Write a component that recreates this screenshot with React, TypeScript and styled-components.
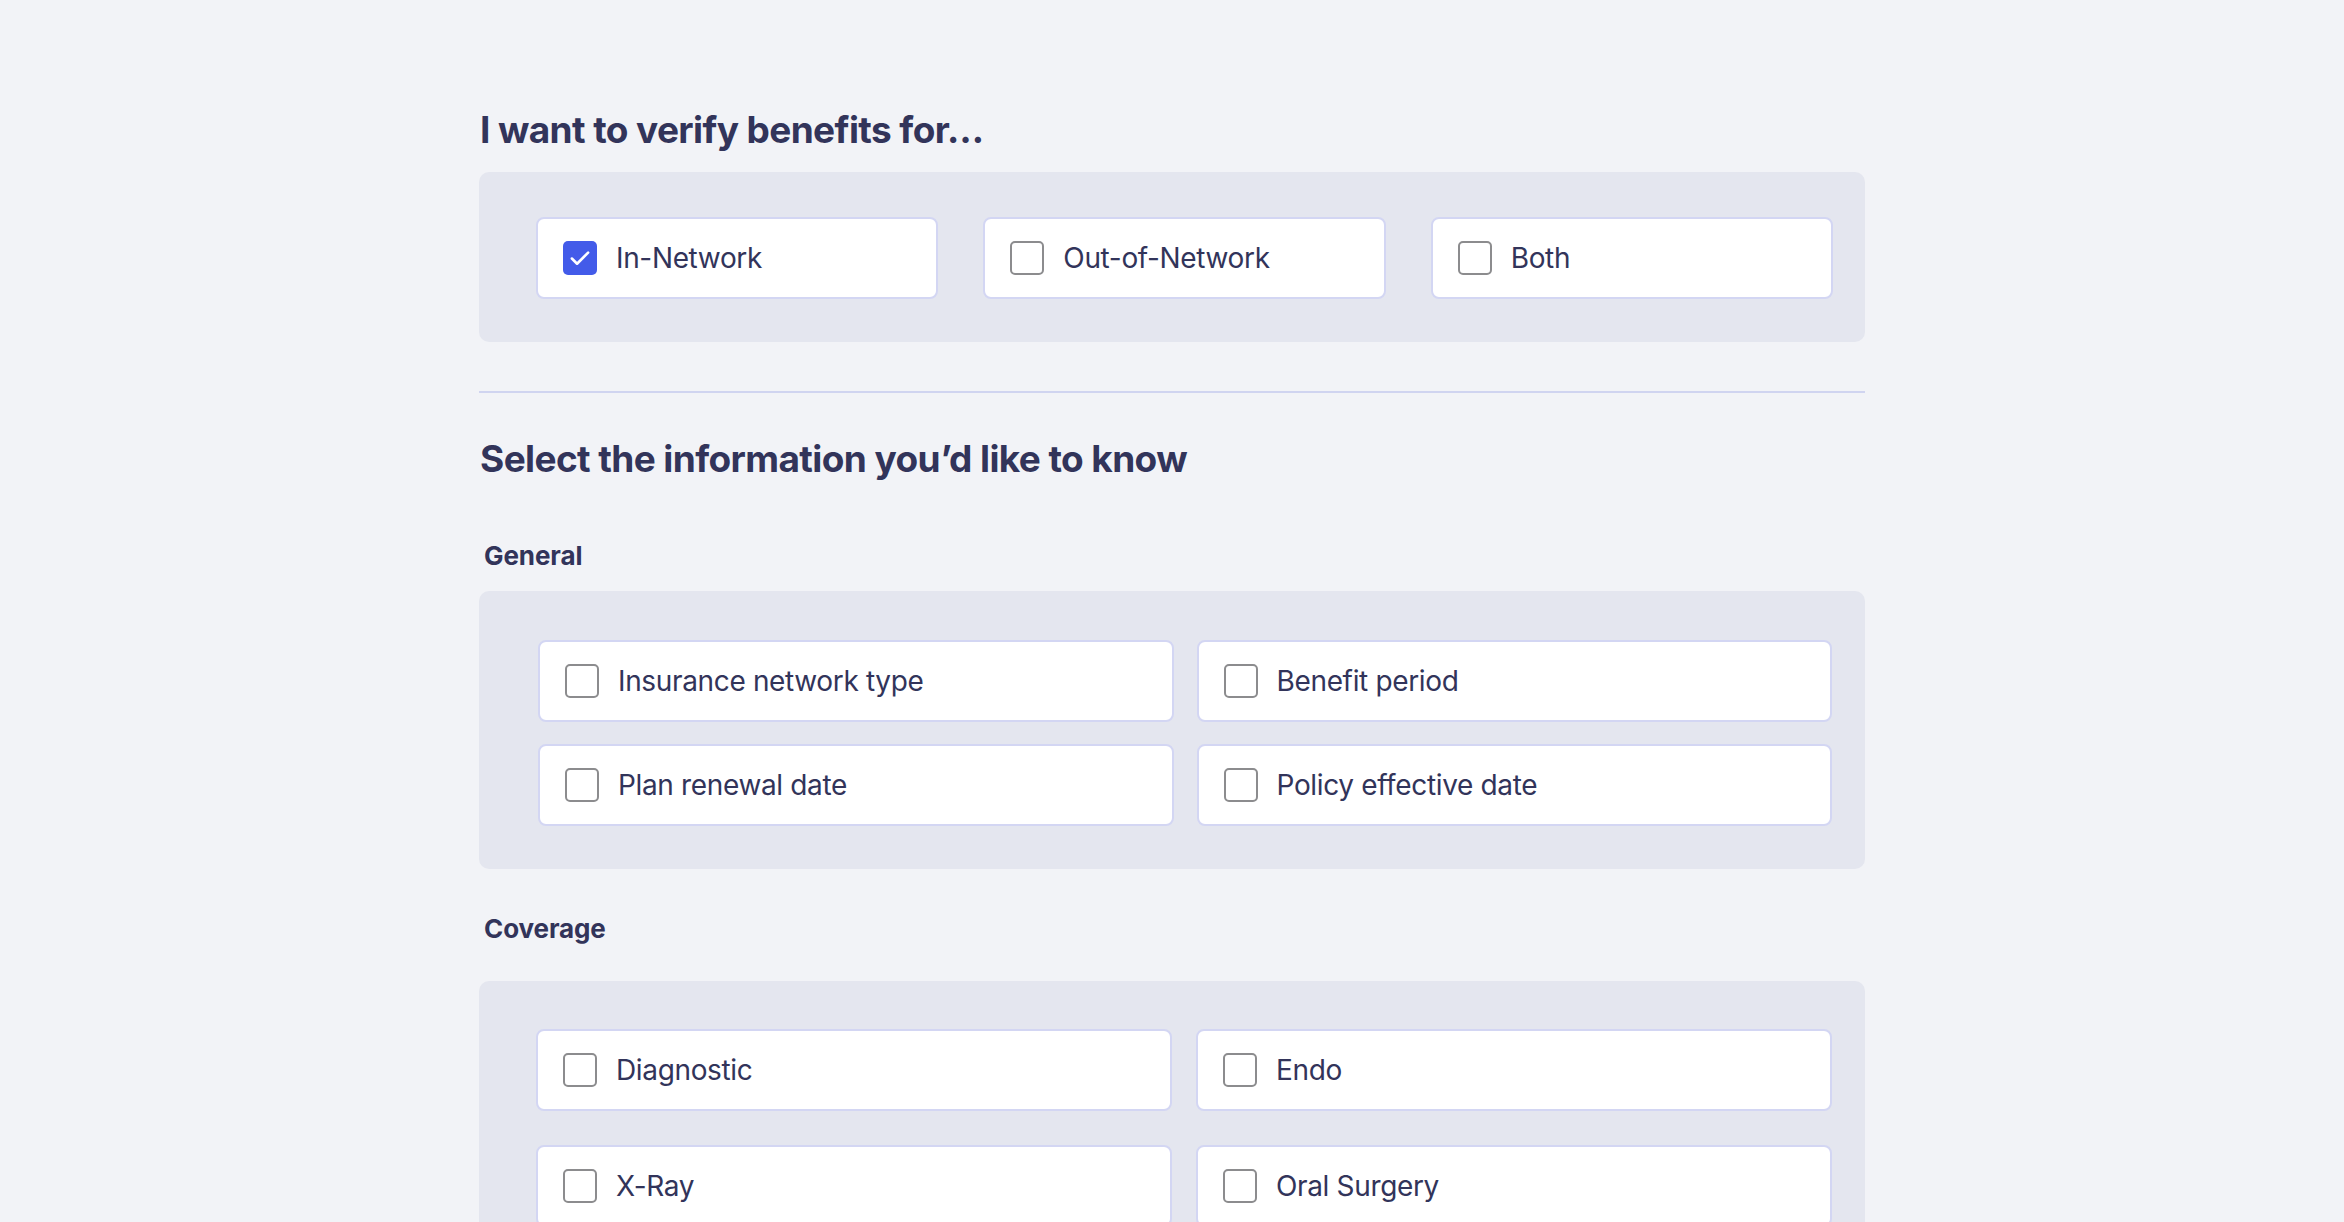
import React from "react";
import styled, { createGlobalStyle } from "styled-components";

const GlobalStyle = createGlobalStyle`
  html, body {
    margin: 0;
    padding: 0;
    background: #f2f3f7;
  }
  body {
    font-family: Inter, "Noto Sans", "Liberation Sans", sans-serif;
    color: #32345a;
  }
  * { box-sizing: border-box; }
`;

const Page = styled.main`
  width: 1386px;
  margin: 0 auto;
  padding-top: 108px;
  padding-bottom: 80px;
`;

const Heading = styled.h2<{ $mt?: number }>`
  margin: ${(p) => p.$mt ?? 0}px 0 0 1px;
  font-family: Inter, "Noto Sans", sans-serif;
  font-size: 37px;
  line-height: 1.2;
  font-weight: 700;
  letter-spacing: -0.6px;
  color: #32345a;
`;

const GroupLabel = styled.h3<{ $mt: number }>`
  margin: ${(p) => p.$mt}px 0 0 5px;
  font-size: 26px;
  line-height: 1.2;
  font-weight: 700;
  letter-spacing: -0.1px;
  color: #32345a;
`;

const Divider = styled.hr`
  margin: 49px 0 0;
  border: none;
  height: 2px;
  background: #d0d4f0;
`;

const Panel = styled.section<{
  $cols: number;
  $pad: string;
  $gap: string;
  $mt: number;
}>`
  margin-top: ${(p) => p.$mt}px;
  background: #e4e6ef;
  border-radius: 10px;
  padding: ${(p) => p.$pad};
  display: grid;
  grid-template-columns: repeat(${(p) => p.$cols}, 1fr);
  gap: ${(p) => p.$gap};
`;

const Card = styled.label`
  height: 82px;
  background: #ffffff;
  border: 2px solid #d3d6f3;
  border-radius: 8px;
  display: flex;
  align-items: center;
  gap: 19px;
  padding-left: 25px;
  cursor: pointer;
`;

const Box = styled.span<{ $checked?: boolean }>`
  width: 34px;
  height: 34px;
  flex: none;
  border-radius: 5px;
  border: ${(p) => (p.$checked ? "none" : "2px solid #8c8c8e")};
  background: ${(p) => (p.$checked ? "#435be9" : "#ffffff")};
  display: flex;
  align-items: center;
  justify-content: center;
`;

const LabelText = styled.span`
  font-size: 28px;
  line-height: 1;
  font-weight: 400;
  letter-spacing: -0.35px;
  color: #32345a;
`;

type Item = { label: string; checked?: boolean };

const Check = () => (
  <svg width="26" height="26" viewBox="0 0 24 24" fill="none">
    <path
      d="M4.5 12.5l4.8 4.8L19.5 7"
      stroke="#ffffff"
      strokeWidth="2.4"
      strokeLinecap="round"
      strokeLinejoin="round"
    />
  </svg>
);

const Option = ({ label, checked }: Item) => (
  <Card>
    <Box $checked={checked}>{checked && <Check />}</Box>
    <LabelText>{label}</LabelText>
  </Card>
);

const networks: Item[] = [
  { label: "In-Network", checked: true },
  { label: "Out-of-Network" },
  { label: "Both" },
];

const general: Item[] = [
  { label: "Insurance network type" },
  { label: "Benefit period" },
  { label: "Plan renewal date" },
  { label: "Policy effective date" },
];

const coverage: Item[] = [
  { label: "Diagnostic" },
  { label: "Endo" },
  { label: "X-Ray" },
  { label: "Oral Surgery" },
  { label: "Preventive" },
  { label: "Periodontics" },
];

export default function App() {
  return (
    <>
      <GlobalStyle />
      <Page>
        <Heading>I want to verify benefits for…</Heading>
        <Panel $cols={3} $pad="45px 32px 43px 57px" $gap="45px" $mt={20}>
          {networks.map((i) => (
            <Option key={i.label} {...i} />
          ))}
        </Panel>

        <Divider />

        <Heading $mt={44}>Select the information you’d like to know</Heading>

        <GroupLabel $mt={58}>General</GroupLabel>
        <Panel $cols={2} $pad="49px 33px 43px 59px" $gap="22px 23px" $mt={20}>
          {general.map((i) => (
            <Option key={i.label} {...i} />
          ))}
        </Panel>

        <GroupLabel $mt={44}>Coverage</GroupLabel>
        <Panel $cols={2} $pad="48px 33px 43px 57px" $gap="34px 24px" $mt={37}>
          {coverage.map((i) => (
            <Option key={i.label} {...i} />
          ))}
        </Panel>
      </Page>
    </>
  );
}
